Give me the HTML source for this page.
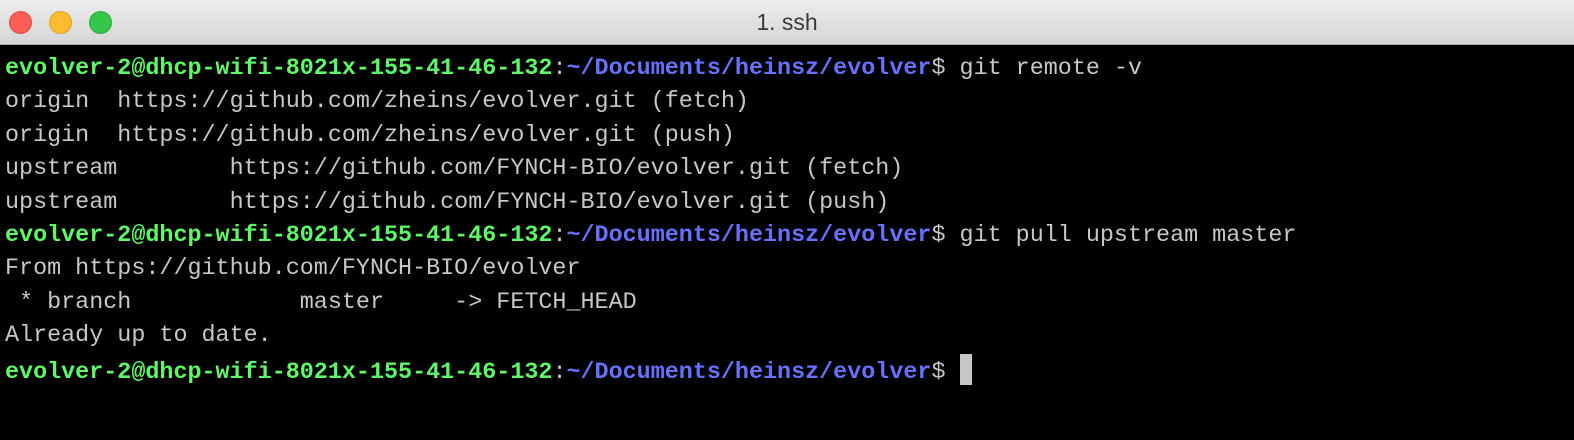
<!DOCTYPE html>
<html><head><style>
html,body{margin:0;padding:0;background:#000;width:1574px;height:440px;overflow:hidden}
.tb{position:absolute;left:0;top:0;width:1574px;height:44px;background:linear-gradient(#ececec,#d6d6d6);border-bottom:1px solid #a8a8a8}
.dot{position:absolute;top:11px;width:21px;height:21px;border-radius:50%}
.title{position:absolute;top:9px;left:0;width:1574px;text-align:center;line-height:26px;font:23px/26px "Liberation Sans",sans-serif;color:#3a3a3a}
pre{position:absolute;left:5px;top:53px;margin:0;font:23.4px/33.4px "Liberation Mono",monospace;color:#c7c7c7}
.g{color:#5ff967;font-weight:bold}.b{color:#6871ff;font-weight:bold}
.cur{display:inline-block;width:12px;height:31px;background:#c7c7c7;vertical-align:-7px}
</style></head><body>
<div class="tb">
<div class="dot" style="left:9px;background:#fc5f57;border:1px solid #de4841"></div>
<div class="dot" style="left:49px;background:#fdbc2e;border:1px solid #dea123"></div>
<div class="dot" style="left:89px;background:#34c84a;border:1px solid #27aa35"></div>
<div class="title">1. ssh</div>
</div>
<pre><span class="g">evolver-2@dhcp-wifi-8021x-155-41-46-132</span>:<span class="b">~/Documents/heinsz/evolver</span>$ git remote -v
origin  https://github.com/zheins/evolver.git (fetch)
origin  https://github.com/zheins/evolver.git (push)
upstream        https://github.com/FYNCH-BIO/evolver.git (fetch)
upstream        https://github.com/FYNCH-BIO/evolver.git (push)
<span class="g">evolver-2@dhcp-wifi-8021x-155-41-46-132</span>:<span class="b">~/Documents/heinsz/evolver</span>$ git pull upstream master
From https://github.com/FYNCH-BIO/evolver
 * branch            master     -&gt; FETCH_HEAD
Already up to date.
<span class="g">evolver-2@dhcp-wifi-8021x-155-41-46-132</span>:<span class="b">~/Documents/heinsz/evolver</span>$ <span class="cur"></span></pre>
</body></html>
